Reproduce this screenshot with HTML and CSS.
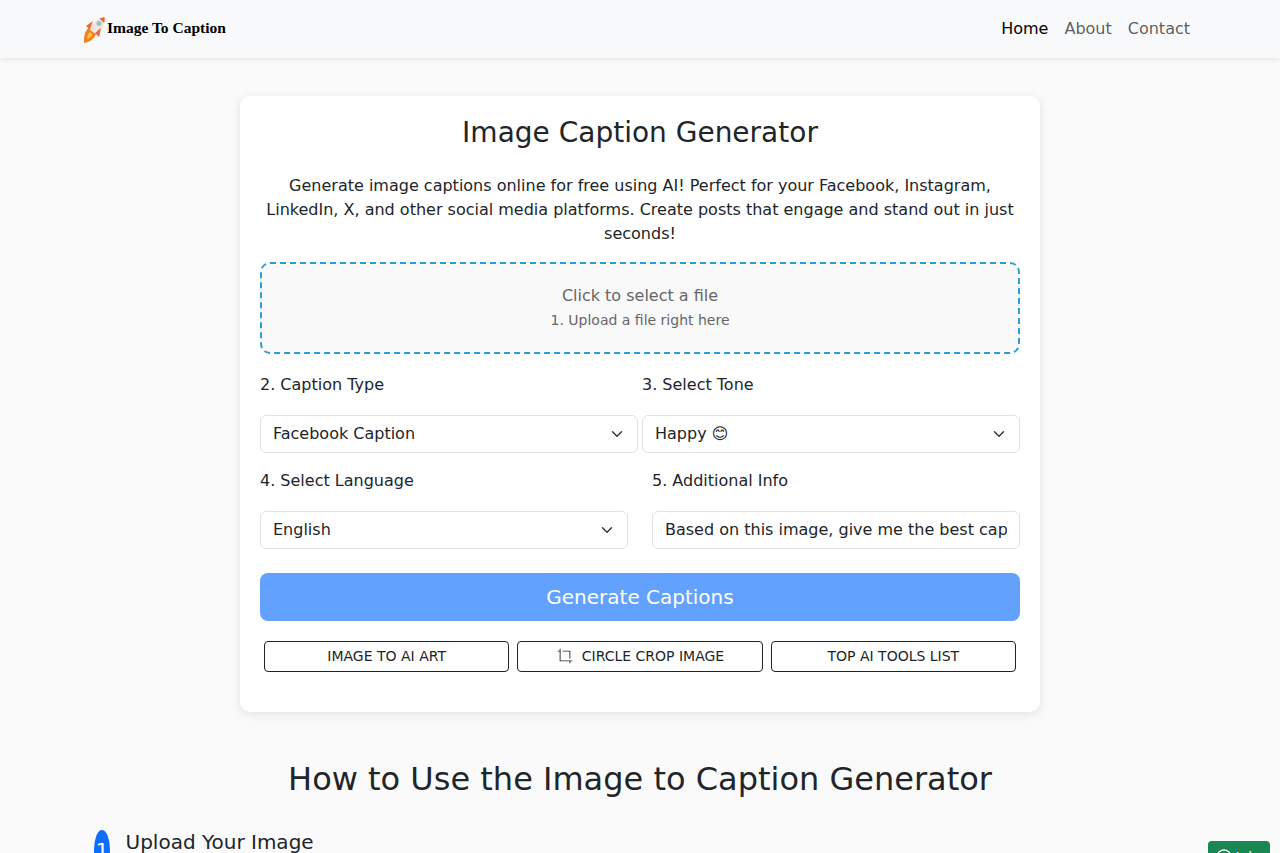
FILE: index.html
```html
<!DOCTYPE html>
<html lang="en">
<head>
    <meta charset="UTF-8">
    <meta name="viewport" content="width=device-width, initial-scale=1.0">
    <title>Image Caption Generator</title>
    <link rel="stylesheet" href="styles.css">
</head>
<body>
    <nav class="navbar">
        <a class="brand" href="#">
            <svg class="brand-icon" width="22" height="26" viewBox="0 0 22 26">
                <path d="M0 26 C-0.500 20 1 14 5 10 L12 17 C10 22 6 25 0 26Z" fill="#f0831e"/>
                <path d="M3 22 C3 19 4 17 6 15 L8.500 17.500 C7.500 19.500 5.500 21 3 22Z" fill="#fbbf45"/>
                <path d="M6 13 C7 7 12 2 20.500 0 C21.500 7 18 13 12 17Z" fill="#f4e4da"/>
                <path d="M15.500 1.500 C17 1 18.500 0.500 20.500 0 C20.800 2 20.700 4 20.200 6Z" fill="#e4683f"/>
                <circle cx="15" cy="6.500" r="2.500" fill="#86c6d8"/>
                <path d="M2 9 L9 4 L6 12Z M11 16 L17 11 L15 20Z" fill="#e4683f"/>
            </svg>
            <span class="brand-text">Image To Caption</span>
        </a>
        <div class="nav-links">
            <a class="nav-link active" href="#">Home</a>
            <a class="nav-link" href="#">About</a>
            <a class="nav-link" href="#">Contact</a>
        </div>
    </nav>

    <main class="page">
        <section class="card">
            <h1 class="card-title">Image Caption Generator</h1>
            <p class="intro">Generate image captions online for free using AI! Perfect for your Facebook, Instagram, LinkedIn, X, and other social media platforms. Create posts that engage and stand out in just seconds!</p>

            <div class="dropzone">
                <div class="dropzone-main">Click to select a file</div>
                <div class="dropzone-sub">1. Upload a file right here</div>
            </div>

            <div class="field-row field-row-tight">
                <div class="field">
                    <label for="captionType">2. Caption Type</label>
                    <select id="captionType">
                        <option>Facebook Caption</option>
                    </select>
                </div>
                <div class="field">
                    <label for="tone">3. Select Tone</label>
                    <select id="tone">
                        <option>Happy 😊</option>
                    </select>
                </div>
            </div>

            <div class="field-row">
                <div class="field">
                    <label for="language">4. Select Language</label>
                    <select id="language">
                        <option>English</option>
                    </select>
                </div>
                <div class="field">
                    <label for="info">5. Additional Info</label>
                    <input type="text" id="info" value="Based on this image, give me the best caption">
                </div>
            </div>

            <button type="button" class="btn-generate">Generate Captions</button>

            <div class="tool-links">
                <a class="tool-link" href="#">IMAGE TO AI ART</a>
                <a class="tool-link" href="#">
                    <svg class="crop-icon" width="16" height="16" viewBox="0 0 18 18" fill="currentColor">
                        <path d="M3.500.5A.5.500 0 0 1 4 1v13h13a.5.500 0 0 1 0 1h-2v2a.5.500 0 0 1-1 0v-2H3.500a.5.500 0 0 1-.5-.5V4H1a.5.500 0 0 1 0-1h2V1a.5.500 0 0 1 .5-.5zm2.500 3a.5.500 0 0 1 .5-.5h8a.5.500 0 0 1 .5.500v8a.5.500 0 0 1-1 0V4H6.500a.5.500 0 0 1-.5-.5z"/>
                    </svg>
                    CIRCLE CROP IMAGE
                </a>
                <a class="tool-link" href="#">TOP AI TOOLS LIST</a>
            </div>
        </section>

        <section class="how-to">
            <h2 class="how-title">How to Use the Image to Caption Generator</h2>
            <div class="step">
                <span class="step-num">1</span>
                <h3 class="step-title">Upload Your Image</h3>
            </div>
        </section>
    </main>

    <a class="join-btn" href="#">
        <svg width="16" height="16" viewBox="0 0 16 16" fill="none" stroke="currentColor" stroke-width="1.300">
            <circle cx="8" cy="8" r="7"/>
        </svg>
        Join
    </a>
</body>
</html>
```

FILE: styles.css
```css
* {
    box-sizing: border-box;
}

html, body {
    height: 100%;
}

body {
    margin: 0;
    height: 100vh;
    overflow: hidden;
    background: #fafafa;
    color: #212529;
    font-family: 'DejaVu Sans', sans-serif;
    font-size: 16px;
    line-height: 24px;
}

a {
    text-decoration: none;
}

.navbar {
    display: flex;
    justify-content: space-between;
    align-items: center;
    height: 58px;
    padding: 0 90px 0 84px;
    background: #f8f9fa;
    box-shadow: 0 2px 4px rgba(0, 0, 0, 0.08);
}

.brand {
    display: flex;
    align-items: center;
    gap: 1px;
    color: #000;
}

.brand-icon {
    margin-top: 2px;
}

.brand-text {
    margin-top: -2px;
    font-family: 'Liberation Serif', serif;
    font-weight: bold;
    font-size: 15.500px;
}

.nav-links {
    display: flex;
    gap: 16px;
}

.nav-link {
    color: rgba(0, 0, 0, 0.65);
}

.nav-link.active {
    color: #000;
}

.page {
    padding-top: 38px;
}

.card {
    width: 800px;
    height: 616px;
    margin: 0 auto;
    padding: 20px;
    background: #fff;
    border-radius: 10px;
    box-shadow: 0 2px 10px rgba(0, 0, 0, 0.1);
}

.card-title {
    margin: 0 0 25px;
    text-align: center;
    font-size: 28px;
    font-weight: 500;
    line-height: 33px;
}

.intro {
    margin: 0 0 16px;
    text-align: center;
}

.dropzone {
    height: 92px;
    padding-top: 20px;
    border: 2px dashed #2a9fd6;
    border-radius: 10px;
    background: #f9f9f9;
    text-align: center;
    color: #666;
}

.dropzone-main {
    line-height: 24px;
}

.dropzone-sub {
    font-size: 14px;
    line-height: 24px;
}

.field-row {
    display: grid;
    grid-template-columns: 1fr 1fr;
    gap: 24px;
    margin-top: 16px;
}

.field-row-tight {
    gap: 4px;
    margin-top: 19px;
}

label {
    display: block;
    margin-bottom: 18px;
}

select, input {
    display: block;
    width: 100%;
    height: 38px;
    padding: 6px 12px;
    border: 1px solid #dee2e6;
    border-radius: 6px;
    background-color: #fff;
    color: #212529;
    font-family: inherit;
    font-size: 16px;
    line-height: 24px;
}

input {
    padding: 5px 12px 7px;
}

select {
    appearance: none;
    padding-right: 36px;
    background-image: url("data:image/svg+xml,%3csvg xmlns='http://www.w3.org/2000/svg' viewBox='0 0 16 16'%3e%3cpath fill='none' stroke='%23343a40' stroke-linecap='round' stroke-linejoin='round' stroke-width='2' d='m2 5 6 6 6-6'/%3e%3c/svg%3e");
    background-repeat: no-repeat;
    background-position: right 12px center;
    background-size: 16px 12px;
}

.btn-generate {
    display: block;
    width: 100%;
    height: 48px;
    margin-top: 24px;
    border: none;
    border-radius: 8px;
    background: #62a1fe;
    color: #fff;
    font-family: inherit;
    font-size: 20px;
}

.tool-links {
    display: grid;
    grid-template-columns: repeat(3, 1fr);
    gap: 8px;
    margin-top: 20px;
    padding: 0 4px;
}

.tool-link {
    display: flex;
    justify-content: center;
    align-items: center;
    gap: 9px;
    height: 31px;
    padding-bottom: 2px;
    border: 1px solid #212529;
    border-radius: 4px;
    color: #212529;
    font-size: 14px;
}

.crop-icon {
    margin: 1px 0 0 1px;
}

.how-to {
    padding: 0 94px;
}

.how-title {
    margin: 48px 0 0;
    text-align: center;
    font-size: 32px;
    font-weight: 500;
    line-height: 38px;
}

.step {
    display: flex;
    align-items: flex-start;
    gap: 15.500px;
    margin-top: 32px;
}

.step-num {
    display: flex;
    justify-content: center;
    align-items: center;
    flex: none;
    width: 16px;
    height: 40px;
    border-radius: 50%;
    background: #0d6efd;
    color: #fff;
    font-size: 20px;
}

.step-title {
    margin: 0;
    font-size: 20px;
    font-weight: 500;
    line-height: 24px;
}

.join-btn {
    position: fixed;
    right: 10px;
    bottom: -19px;
    display: flex;
    align-items: center;
    gap: 4px;
    height: 31px;
    padding: 0 9px 0 8px;
    border-radius: 4px;
    background: #198754;
    color: #fff;
    font-size: 14px;
}
```
